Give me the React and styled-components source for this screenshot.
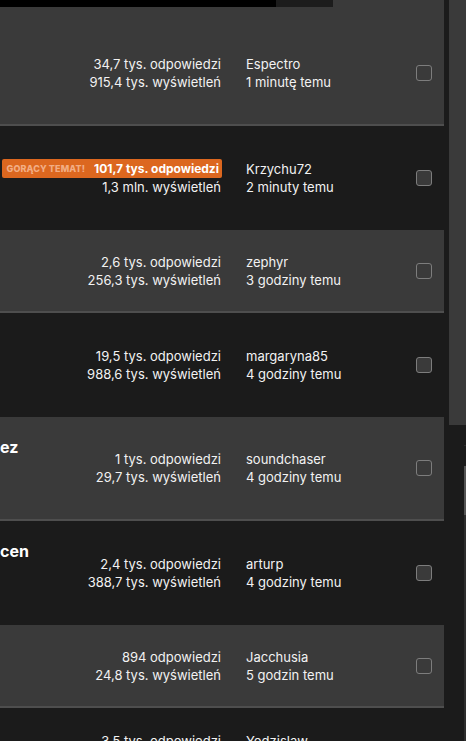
import styled, { createGlobalStyle } from "styled-components"

const GlobalStyle = createGlobalStyle`
    html, body {
        margin: 0;
        padding: 0;
        background: #1b1b1b;
        overflow: hidden;
    }
    body {
        font-family: Inter, "Noto Sans", sans-serif;
        color: #f2f2f2;
    }
`

const topics = [
    { title: "", replies: "34,7 tys. odpowiedzi", views: "915,4 tys. wyświetleń", author: "Espectro", time: "1 minutę temu", tall: true },
    { title: "", hot: true, replies: "101,7 tys. odpowiedzi", views: "1,3 mln. wyświetleń", author: "Krzychu72", time: "2 minuty temu", tall: true },
    { title: "", replies: "2,6 tys. odpowiedzi", views: "256,3 tys. wyświetleń", author: "zephyr", time: "3 godziny temu" },
    { title: "", replies: "19,5 tys. odpowiedzi", views: "988,6 tys. wyświetleń", author: "margaryna85", time: "4 godziny temu", tall: true },
    { title: "ez", replies: "1 tys. odpowiedzi", views: "29,7 tys. wyświetleń", author: "soundchaser", time: "4 godziny temu", tall: true },
    { title: "cen", replies: "2,4 tys. odpowiedzi", views: "388,7 tys. wyświetleń", author: "arturp", time: "4 godziny temu", tall: true },
    { title: "", replies: "894 odpowiedzi", views: "24,8 tys. wyświetleń", author: "Jacchusia", time: "5 godzin temu" },
    { title: "", replies: "3,5 tys. odpowiedzi", views: "55,1 tys. wyświetleń", author: "Yodzislaw", time: "5 godzin temu" },
]

export default function App() {
    return (
        <>
            <GlobalStyle />
            <Page>
                <List>
                    <TopStrip>
                        <ImageEdge />
                    </TopStrip>
                    {topics.map((t, i) => (
                        <Row key={i} $light={i % 2 === 0} $tall={t.tall}>
                            <Title>{t.title}</Title>
                            <Stats>
                                {t.hot ? (
                                    <HotBadge>
                                        <HotLabel>GORĄCY TEMAT!</HotLabel>
                                        <strong>{t.replies}</strong>
                                    </HotBadge>
                                ) : (
                                    <span>{t.replies}</span>
                                )}
                                <span>{t.views}</span>
                            </Stats>
                            <Author>
                                <span>{t.author}</span>
                                <span>{t.time}</span>
                            </Author>
                            <Check />
                        </Row>
                    ))}
                </List>
                <Side>
                    <SideBlock />
                    <SideTick />
                    <SideTrack>
                        <SideThumb />
                    </SideTrack>
                </Side>
            </Page>
        </>
    )
}

const Page = styled.div`
    display: flex;
    gap: 5px;
    height: 741px;
    overflow: hidden;
`
const List = styled.div`
    width: 444px;
    flex-shrink: 0;
    display: flex;
    flex-direction: column;
`
const TopStrip = styled.div`
    height: 22px;
    flex-shrink: 0;
    background: #3a3a3a;
`
const ImageEdge = styled.div`
    width: 333px;
    height: 7px;
    background: linear-gradient(to right, #000 276px, #1c1c1c 276px);
`
const Row = styled.div`
    box-sizing: border-box;
    flex-shrink: 0;
    height: ${p => (p.$tall ? "104px" : "83px")};
    display: grid;
    grid-template-columns: 221px 25px 170px 16px;
    align-items: center;
    padding-right: 12px;
    background: ${p => (p.$light ? "#3a3a3a" : "#1b1b1b")};
    border-bottom: ${p => (p.$light ? "2px solid #4e4e4e" : "none")};
    font-size: 13px;
    line-height: 18px;
`
const Title = styled.div`
    grid-area: 1 / 1;
    align-self: start;
    padding-top: 20px;
    font-size: 16px;
    line-height: 20px;
    font-weight: 700;
    color: #fff;
    white-space: nowrap;
`
const Stats = styled.div`
    grid-area: 1 / 1;
    justify-self: end;
    display: flex;
    flex-direction: column;
    align-items: flex-end;
    text-align: right;
    white-space: nowrap;
`
const HotBadge = styled.span`
    display: flex;
    align-items: center;
    gap: 9px;
    height: 19px;
    padding: 0 3px 0 5px;
    margin-top: -1px;
    margin-right: -1px;
    border-radius: 2px;
    background: #dc671f;
    color: #fff;
    strong {
        font-size: 12px;
        font-weight: 700;
    }
`
const HotLabel = styled.span`
    font-size: 9px;
    font-weight: 800;
    letter-spacing: 0.1px;
    color: #f2ad84;
`
const Author = styled.div`
    grid-column: 3;
    display: flex;
    flex-direction: column;
    white-space: nowrap;
`
const Check = styled.div`
    grid-column: 4;
    box-sizing: border-box;
    width: 16px;
    height: 16px;
    border: 1px solid #7d7d7d;
    border-radius: 3px;
    background: #3a3a3a;
`
const Side = styled.div`
    width: 17px;
    flex-shrink: 0;
    display: flex;
    flex-direction: column;
    align-items: flex-end;
`
const SideBlock = styled.div`
    align-self: stretch;
    height: 425px;
    background: #3a3a3a;
`
const SideTick = styled.div`
    width: 2px;
    height: 1px;
    margin-top: 20px;
    background: #2e2e2e;
`
const SideTrack = styled.div`
    width: 2px;
    flex: 1;
    margin-top: 20px;
    background: #2d2d2d;
`
const SideThumb = styled.div`
    height: 49px;
    background: #555;
`
